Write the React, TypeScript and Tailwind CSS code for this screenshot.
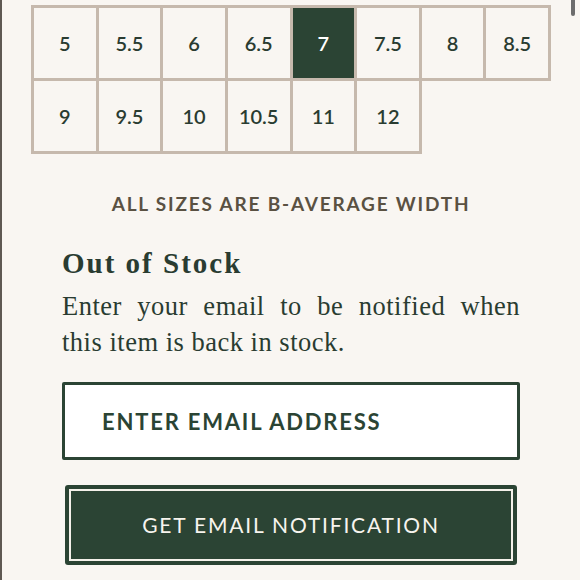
import React from 'react'

const SIZES = ['5', '5.5', '6', '6.5', '7', '7.5', '8', '8.5', '9', '9.5', '10', '10.5', '11', '12']
const SELECTED = '7'

function SizeGrid() {
  return (
    <div className="grid w-[520px] grid-cols-[repeat(8,64.625px)] border-l-[3px] border-t-[3px] border-[#c6b9ad]">
      {SIZES.map((s) => {
        const active = s === SELECTED
        return (
          <div
            key={s}
            className="flex h-[73px] items-center justify-center border-b-[3px] border-r-[3px] border-[#c6b9ad]"
          >
            <div
              className={`flex h-full w-full items-center justify-center text-[20px] font-semibold ${
                active ? 'bg-[#2b4434] text-white' : 'text-[#2a3c31]'
              }`}
            >
              {s}
            </div>
          </div>
        )
      })}
    </div>
  )
}

export default function App() {
  return (
    <div className="relative h-[580px] w-[580px] overflow-hidden border-l-2 border-[#5f5953] bg-[#f9f6f2] font-['Lato',sans-serif]">
      {/* scrollbar thumb */}
      <div className="absolute right-[5px] top-0 h-[16px] w-[4px] rounded-b-full bg-[#6d6d6d]" />

      <div className="ml-[29px] w-[520px] pt-[5px]">
        <SizeGrid />

        <p className="mt-[38px] text-center text-[19px] font-bold leading-[24px] tracking-[1.8px] text-[#5a5142]">
          ALL SIZES ARE B-AVERAGE WIDTH
        </p>

        <div className="px-[31px]">
          <h2 className="mt-[30px] font-['Liberation_Serif',serif] text-[29px] font-bold leading-[34px] tracking-[2px] text-[#2a3c31]">
            Out of Stock
          </h2>
          <p className="mt-[8px] font-['Liberation_Serif',serif] text-[26.5px] leading-[36px] tracking-[0.5px] text-[#2a3c31]">
            <span className="block [text-align:justify] [text-align-last:justify]">Enter your email to be notified when</span>
            <span className="block">this item is back in stock.</span>
          </p>

          <div className="mt-[22px] flex h-[78px] items-center rounded-[2px] border-[3px] border-[#2b4434] bg-white pl-[37px]">
            <span className="text-[22px] font-bold tracking-[1.8px] text-[#2b4434]">ENTER EMAIL ADDRESS</span>
          </div>

          <div className="mx-[3px] mt-[25px] h-[80px] rounded-[3px] bg-[#2b4434] p-[4px]">
            <div className="flex h-full items-center justify-center border-2 border-[#f4f1ea]">
              <span className="text-[21px] tracking-[1.8px] text-[#f7f4ee]">GET EMAIL NOTIFICATION</span>
            </div>
          </div>
        </div>
      </div>
    </div>
  )
}
